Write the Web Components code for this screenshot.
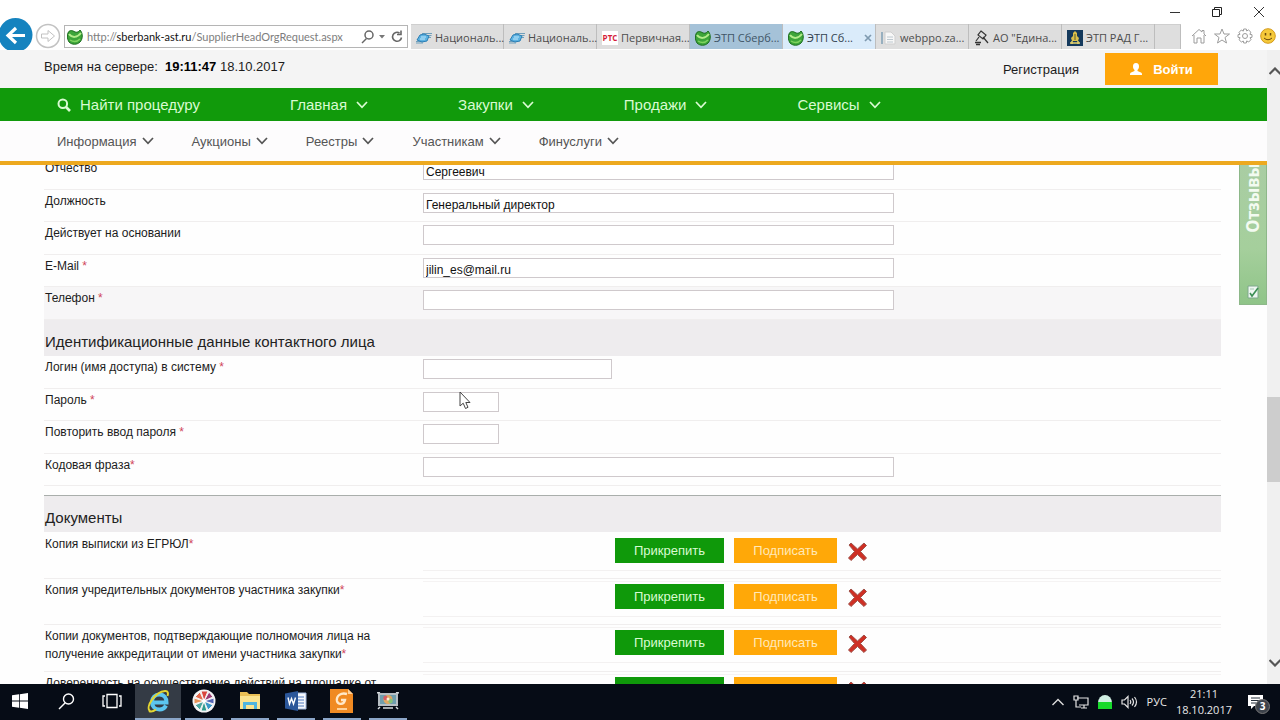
<!DOCTYPE html>
<html lang="ru">
<head>
<meta charset="utf-8">
<title>ЭТП Сбербанк-АСТ</title>
<style>
html,body{margin:0;height:100%;overflow:hidden}
body{font-family:"Liberation Sans",Arial,sans-serif;font-size:13px;color:#1c1c1c;background:#fff}
</style>
</head>
<body>
<desktop-app></desktop-app>
<script>
const define=(name,css,html)=>customElements.define(name,class extends HTMLElement{
  constructor(){
    super();
    const root=this.attachShadow({mode:'open'});
    const t=document.createElement('template');
    const markup=typeof html==='function'?html(n=>this.getAttribute(n)||'',this):html;
    t.innerHTML=`<style>*{box-sizing:border-box}button,input{font:inherit;color:inherit}button{border:0;background:none;padding:0;cursor:pointer}a{color:inherit;text-decoration:none}svg{display:block;flex:none}${css}</style>${markup}`;
    root.append(t.content.cloneNode(true));
  }
});

const icons={
  leaf:`<svg width="16" height="16" viewBox="0 0 16 16"><path d="M1 4C2 1 5 1 8 3C11 4 12 2 13 1C16 4 16 10 13 13C10 16 5 16 2 13C0 10 0 6 1 4Z" fill="#3da53a" stroke="#1b6b1e"/><path d="M2 5C5 9 10 9 14 4" fill="none" stroke="#b4ec8c" stroke-width="2"/><path d="M3 11C6 13 10 13 13 10" fill="none" stroke="#7fd35f" stroke-width="1.5"/></svg>`,
  nep:`<svg width="16" height="16" viewBox="0 0 16 16"><path d="M6 3.500H16M5 5.500H15.500M10 7.500H15M1 9.500H5M0 11.500H9M0 13H7" stroke="#6f9fbb" stroke-width="1"/><path d="M4 5L8 4L13 6L11 11L6 12L1 10Z" fill="#5cb2e2" stroke="#2c7fb5"/><path d="M5 7H10M4 9H9" stroke="#c3e9fc"/></svg>`,
  doc:`<svg width="16" height="16" viewBox="0 0 16 16"><path d="M1 2V14" stroke="#7f9fb4" stroke-width="1.5"/><path d="M4 2H10L14 6V14H4Z" fill="#f7f7f7" stroke="#cfcfcf"/><path d="M6 7H12M6 9.500H12M6 12H12" stroke="#bdc8cf"/></svg>`,
  gavel:`<svg width="16" height="16" viewBox="0 0 16 16" fill="none" stroke="#333" stroke-width="1.200"><path d="M7 1L12 5L9 9L4 5ZM9 7L14 13M5 7L2 11"/><path d="M1 12.500H7M2 14.500H6" stroke-width="1.6"/></svg>`,
  rad:`<svg width="16" height="16" viewBox="0 0 16 16"><path d="M0 0H16V16H0Z" fill="#14395c"/><path d="M8 1L10 3V6L12 8L11 11H5L4 8L6 6V3Z" fill="#d9bf4a"/><path d="M3 13H13M5 11V14M11 11V14" stroke="#e6d36b" stroke-width="1.5"/><path d="M8 4V10" stroke="#5a5f2c"/></svg>`,
  person:`<svg width="12" height="12" viewBox="0 0 12 12"><path d="M6 0C8.200 0 9 1.500 9 3.500C9 5 8.400 6.300 7.500 7V8L11 9.500C12 10 12 11 12 12H0C0 11 0 10 1 9.500L4.500 8V7C3.600 6.300 3 5 3 3.500C3 1.500 3.800 0 6 0Z" fill="#fff"/></svg>`,
  cross:`<svg width="21" height="21" viewBox="0 0 21 21"><path d="M2 4L4 2L10.500 8L17 2L19.500 4.500L13.500 10.500L19.500 17L17 19.500L10.500 13.500L4 19.500L1.500 17L7.500 10.500Z" fill="#cf2f24" stroke="#a0524a"/></svg>`,
  start:`<svg width="16" height="16" viewBox="0 0 16 16" fill="#fff"><path d="M0 2.300L7 1.300V7.600H0ZM7.800 1.200L16 0V7.600H7.800ZM0 8.400H7V14.700L0 13.700ZM7.800 8.400H16V16L7.800 14.800Z"/></svg>`,
  find:`<svg width="17" height="17" viewBox="0 0 17 17" fill="none" stroke="#fff" stroke-width="1.4"><circle cx="10.500" cy="6" r="5"/><path d="M7 10L1 16"/></svg>`,
  views:`<svg width="20" height="16" viewBox="0 0 20 16" fill="none" stroke="#fff" stroke-width="1.3"><path d="M5 1.500H15V14.500H5ZM3 3H1V13H3M17 3H19V13H17"/></svg>`,
  ie:`<svg width="24" height="24" viewBox="0 0 24 24" fill="none"><path d="M20 16.500C18.500 19.500 16 20.500 13.500 20.500C9 20.500 6 17.500 6 13C6 8.500 9 5.500 13.500 5.500C18 5.500 20.500 9 20.500 13.500H8" stroke="#5cc6f0" stroke-width="4"/><path d="M4 22C-1 18 9 3 19 2C22 1.700 22.500 4 21.500 7" stroke="#e3d532" stroke-width="2"/><path d="M3 22C5 23 8 22 10 20.500" stroke="#e3d532" stroke-width="2"/></svg>`,
  wheel:`<svg width="24" height="24" viewBox="0 0 24 24"><circle cx="12" cy="12" r="11.500" fill="#f4f4f4"/><g stroke="#f4f4f4"><path d="M12 12L9 2L16 2Z" fill="#d9463d"/><path d="M12 12L17 3L21 8Z" fill="#9c3b74"/><path d="M12 12L22 9L22 15Z" fill="#5566b5"/><path d="M12 12L21 16L16 21Z" fill="#3a98c8"/><path d="M12 12L15 22L9 22Z" fill="#2f9b8e"/><path d="M12 12L8 21L3 16Z" fill="#4aa7a0"/><path d="M12 12L2 15L2 9Z" fill="#e8935a"/><path d="M12 12L3 8L8 3Z" fill="#e56a4c"/></g><circle cx="12" cy="12" r="2" fill="#fff"/></svg>`,
  folder:`<svg width="22" height="20" viewBox="0 0 22 20"><path d="M1 1H8L10 3H21V18H1Z" fill="#e9bf55"/><path d="M1 5H21V18H1Z" fill="#fbe38f"/><path d="M4 11H18V18H15V14H7V18H4Z" fill="#4fb4de"/></svg>`,
  word:`<svg width="22" height="20" viewBox="0 0 22 20"><path d="M11 2H21V18H11Z" fill="#f5f8fc" stroke="#9fb7dd"/><path d="M13 6H19M13 9H19M13 12H19M13 15H19" stroke="#4e7ac0"/><path d="M0 2.500L13 0V20L0 17.500Z" fill="#2b579a"/><path d="M3 6.500L4.500 13L6.500 7.500L8.500 13L10.500 6.500" fill="none" stroke="#fff" stroke-width="1.400"/></svg>`,
  foxit:`<svg width="24" height="24" viewBox="0 0 24 24"><path d="M0 0H18L23 5V24H0Z" fill="#f08a22"/><path d="M18 0V5H23Z" fill="#ffd29a"/><path d="M17 5C11 3 6 7 7 12C8 16 14 16 15 11H11" fill="none" stroke="#ffe8c8" stroke-width="2.400"/><path d="M7 20H17" stroke="#ffd29a" stroke-width="2"/></svg>`,
  monitor:`<svg width="22" height="18" viewBox="0 0 22 18"><path d="M1 1H21V14H1Z" fill="#b7bfc4"/><path d="M3 3H19V12H3Z" fill="#6f9fae"/><circle cx="11" cy="7.500" r="4.500" fill="#e0a862"/><circle cx="8.500" cy="6" r="2.200" fill="#d75e64"/><circle cx="13.500" cy="9" r="2.200" fill="#84c47a"/><circle cx="11" cy="7" r="1.500" fill="#fff3d8"/><path d="M0 1L3 0M19 0L22 1M6 16H16M1 17L3 15M21 17L19 15" stroke="#d8dde0" stroke-width="1.500"/></svg>`
};
const chevron=`<svg width="12" height="8" viewBox="0 0 12 8"><path d="M1 1L6 6.300L11 1" fill="none" stroke="currentColor" stroke-width="1.700"/></svg>`;

define('browser-tab',`
:host{display:flex;flex:0 1 93px;min-width:0;border-right:1px solid #bdbdbd}
button{display:flex;align-items:center;gap:3px;width:100%;padding:2px 3px 0 5px;background:#dedede;color:#4d4d4d;text-align:left;border-top:1px solid #cfcfcf}
:host([state=group]) button{background:#a5c2d8;border-color:#a5c2d8;color:#3f5566}
:host([state=active]) button{background:#daebfa;border-color:#daebfa;color:#33424f}
span{white-space:nowrap;flex:1}
.rts{flex:none;width:16px;text-align:center;font:bold 8px/14px "Open Sans",sans-serif;color:#d51d3a;background:#fff}
`,g=>`<button role="tab">${g('icon')==='rts'?'<b class="rts">РТС</b>':icons[g('icon')]}<span><slot></slot></span>${g('state')==='active'?'<svg width="8" height="8" viewBox="0 0 8 8"><path d="M1 1L7 7M7 1L1 7" stroke="#7f9ab0" stroke-width="1.700"/></svg>':''}</button>`);

define('browser-chrome',`
:host{display:block;flex:none;height:50px;background:#fff;overflow:hidden;font:11px/16px "Open Sans","Noto Sans",sans-serif}
.title{display:flex;justify-content:flex-end;align-items:center;gap:32px;height:24px;padding-right:16px}
.bar{display:flex;height:25px;align-items:stretch}
.back{margin-top:-7px;margin-left:-2px}
.fwd{margin:-1px 3px 0 2px}
.addr{flex:1;min-width:160px;display:flex;align-items:center;gap:4px;height:23px;margin-top:1px;border:1px solid #b5b5b5;padding:0 3px 0 2px;background:#fff}
.url{flex:1;min-width:0;position:relative;display:flex}
.url input{width:100%;border:0;outline:0;padding:0;color:transparent;background:none;height:18px}
.url label{position:absolute;left:0;top:0;color:#7d7d7d;white-space:nowrap;font:11px/18px Lato,"Open Sans",sans-serif}
.url b{font-weight:400;color:#111}
.tabs{display:flex;flex:0 1 771px;margin-left:3px;min-width:0}
.new{flex:0 1 26px;background:#dedede;border-top:1px solid #cfcfcf;border-right:1px solid #bdbdbd}
.tools{display:flex;gap:7px;align-items:center;padding:0 4px 2px 9px}
`,`<div class="title">
<button aria-label="Свернуть"><svg width="10" height="10" viewBox="0 0 10 10"><path d="M0 5.500H10" stroke="#333"/></svg></button>
<button aria-label="Развернуть"><svg width="10" height="10" viewBox="0 0 10 10" fill="none" stroke="#222"><path d="M.5 2.500H7.500V9.500H.5ZM2.500 2.500V.5H9.500V7.500H7.500"/></svg></button>
<button aria-label="Закрыть"><svg width="10" height="10" viewBox="0 0 10 10"><path d="M0 0L10 10M10 0L0 10" stroke="#333"/></svg></button></div>
<div class="bar">
<button class="back" aria-label="Назад"><svg width="35" height="36" viewBox="0 0 35 36"><circle cx="17.500" cy="18" r="17" fill="#1583bf"/><path d="M27 18.500H10M18 11L10 18.500L18 26" fill="none" stroke="#fff" stroke-width="3.200"/></svg></button>
<button class="fwd" aria-label="Вперёд"><svg width="26" height="26" viewBox="0 0 26 26" fill="none" stroke="#c2c2c2"><circle cx="13" cy="13" r="11.500" stroke-width="1.500"/><path d="M6.500 11H13V7.500L19.500 13L13 18.500V15H6.500Z"/></svg></button>
<div class="addr">${icons.leaf}<div class="url"><input id="u" aria-label="Адрес"><label for="u">http://<b>sberbank-ast.ru</b>/SupplierHeadOrgRequest.aspx</label></div>
<svg width="13" height="14" viewBox="0 0 13 14" fill="none" stroke="#666" stroke-width="1.500"><circle cx="8" cy="5" r="4"/><path d="M5.500 8.500L1 13"/></svg>
<svg width="8" height="4" viewBox="0 0 8 4"><path d="M1 0H7L4 3.500Z" fill="#777"/></svg>
<svg width="14" height="13" viewBox="0 0 14 13" fill="none" stroke="#666" stroke-width="1.600"><path d="M11.500 7.500A4.500 4.500 0 1 1 9.500 3M7 4.500H11V.5"/></svg></div>
<div class="tabs" role="tablist">
<browser-tab icon="nep">Националь...</browser-tab><browser-tab icon="nep">Националь...</browser-tab><browser-tab icon="rts">Первичная...</browser-tab><browser-tab icon="leaf" state="group">ЭТП Сберб...</browser-tab><browser-tab icon="leaf" state="active">ЭТП Сб...</browser-tab><browser-tab icon="doc">webppo.za...</browser-tab><browser-tab icon="gavel">АО "Едина...</browser-tab><browser-tab icon="rad">ЭТП РАД Г...</browser-tab><button class="new" aria-label="Новая вкладка"></button></div>
<div class="tools">
<button aria-label="Домой"><svg width="16" height="16" viewBox="0 0 16 16" fill="none" stroke="#9c9c9c"><path d="M1 8L8 1.500L11 4V2.500H13V6L15 8M3 7V15H6V10H10V15H13V7"/></svg></button>
<button aria-label="Избранное"><svg width="16" height="16" viewBox="0 0 16 16" fill="none" stroke="#9c9c9c"><path d="M8 1L10 6H15.500L11 9.500L12.500 15L8 12L3.500 15L5 9.500L.5 6H6Z"/></svg></button>
<button aria-label="Сервис"><svg width="16" height="16" viewBox="0 0 16 16" fill="none" stroke="#9c9c9c"><circle cx="8" cy="8" r="2.500"/><path d="M6.700 1H9.300L9.700 3L11.500 1.900L13.900 4.200L12.900 6.300L15 6.700V9.300L13 9.700L14 11.600L11.700 14L9.700 12.900L9.300 15H6.700L6.300 13L4.400 14L2 11.700L3.100 9.700L1 9.300V6.700L3 6.300L2 4.400L4.300 2L6.300 3.100Z"/></svg></button>
<button aria-label="Отзыв"><svg width="16" height="16" viewBox="0 0 16 16"><circle cx="8" cy="8" r="7.300" fill="#f5c93a" stroke="#d39a1c"/><path d="M5.500 5V7.500M10.500 5V7.500" stroke="#6b4a0c" stroke-width="1.500"/><path d="M4 10Q8 13.500 12 10" fill="none" stroke="#6b4a0c"/></svg></button>
</div></div>`);

define('menu-item',`:host{display:block}button{display:flex;align-items:center;gap:var(--menu-gap,5px);white-space:nowrap}`,
`<button aria-haspopup="true"><slot></slot>${chevron}</button>`);

define('site-header',`
:host{display:block;flex:none}
.top{display:flex;align-items:center;height:38px;padding:0 49px 0 44px;background:#f4f4f4}
.time{flex:1;padding-bottom:5px;white-space:pre}
.time b{color:#000}
.reg{margin-right:26px}
.login{display:flex;align-items:center;justify-content:center;gap:11px;width:113px;height:32px;background:#ffa60a;color:#fff;font-weight:700}
.main{display:flex;align-items:center;gap:90px;height:33px;padding:0 57px;background:#119a0b;color:#d9fbd2;font-size:15px;--menu-gap:9px}
.find{display:flex;align-items:center;gap:9px;white-space:nowrap}
.sub{display:flex;align-items:center;gap:38px;height:44px;padding:0 57px;background:#fdfcfd;color:#555;border-bottom:4px solid #eda91f}
`,`<div class="top"><div class="time">Время на сервере:  <b>19:11:47</b> 18.10.2017</div><a class="reg" href="#">Регистрация</a><button class="login">${icons.person}Войти</button></div>
<nav class="main"><a class="find" href="#"><svg width="14" height="14" viewBox="0 0 14 14" fill="none" stroke="#d9fbd2"><circle cx="5.800" cy="5.800" r="4.300" stroke-width="2"/><path d="M9 9L13 13" stroke-width="2.600"/></svg>Найти процедуру</a><menu-item>Главная</menu-item><menu-item>Закупки</menu-item><menu-item>Продажи</menu-item><menu-item>Сервисы</menu-item></nav>
<nav class="sub"><menu-item>Информация</menu-item><menu-item>Аукционы</menu-item><menu-item>Реестры</menu-item><menu-item>Участникам</menu-item><menu-item>Финуслуги</menu-item></nav>`);

define('form-field',`
:host{display:grid;grid-template-columns:379px 1fr;align-items:start;height:32px;border-bottom:1px solid #f0eeee;line-height:18px}
:host(:nth-of-type(odd)){height:33px}
:host([shaded]){background:#f7f6f7}
label{padding:2px 0 0 1px}
i{font-style:normal;color:#d0455a}
input{display:block;width:471px;max-width:100%;height:20px;margin-top:3px;padding:3px 2px 0;border:1px solid #cfc9cc;border-radius:0;background:#fff;outline:0;color:#111}
:host([size=m]) input{width:189px}
:host([size=s]) input{width:76px}
`,g=>`<label for="f">${g('label')}${g('req')?`<i>${g('req')==='tight'?'':' '}*</i>`:''}</label><input id="f" type="${g('type')||'text'}" value="${g('value')}">`);

define('section-title',`
:host{display:block;background:#eeecee}
:host([ruled]){margin-top:9px;border-top:1px solid #a9aeab}
h2{margin:0;padding:13px 1px 5px;font-weight:400;font-size:15px;line-height:18px;color:#222}
`,`<h2><slot></slot></h2>`);

define('document-row',`
:host{display:grid;grid-template-columns:379px 1fr;align-items:start;padding:2px 0 7px;border-bottom:1px solid #f0eeee;line-height:18px}
.name{padding:0 20px 1px 1px}
i{font-style:normal;color:#d0455a}
:host([optional]) i{display:none}
.act{display:flex;align-items:center;gap:10px;padding:2px 0 7px 192px;border-top:1px solid #f5f3f3;border-bottom:1px solid #f3f1f1}
:host(:first-of-type) .act{border-top-color:transparent}
.attach,.sign{height:25px;font-size:13px}
.attach{width:109px;background:#0f990a;color:#d9fbd2}
.sign{width:103px;background:#ffa808;color:#ffe9b8}
.del{margin-top:1px;height:21px}
`,`<div class="name"><slot></slot><i>*</i></div><div class="act"><button class="attach">Прикрепить</button><button class="sign">Подписать</button><button class="del" aria-label="Удалить">${icons.cross}</button></div>`);

define('registration-form',`
:host{display:block;flex:1;min-height:0;overflow:hidden;background:#fefefe;font-size:12px}
form{margin:-8px 46px 0 44px}
.docs{padding-top:1px}
`,`<form><div>
<form-field label="Отчество" value="Сергеевич"></form-field>
<form-field label="Должность" value="Генеральный директор"></form-field>
<form-field label="Действует на основании"></form-field>
<form-field label="E-Mail" req="1" value="jilin_es@mail.ru"></form-field>
<form-field label="Телефон" req="1" shaded></form-field></div>
<section-title>Идентификационные данные контактного лица</section-title><div>
<form-field label="Логин (имя доступа) в систему" req="1" size="m"></form-field>
<form-field label="Пароль" req="1" size="s" type="password"></form-field>
<form-field label="Повторить ввод пароля" req="1" size="s" type="password"></form-field>
<form-field label="Кодовая фраза" req="tight"></form-field></div>
<section-title ruled>Документы</section-title>
<div class="docs">
<document-row>Копия выписки из ЕГРЮЛ</document-row>
<document-row>Копия учредительных документов участника закупки</document-row>
<document-row>Копии документов, подтверждающие полномочия лица на получение аккредитации от имени участника закупки</document-row>
<document-row optional>Доверенность на осуществление действий на площадке от</document-row></div></form>`);

define('feedback-tab',`
:host{display:block}
button{display:flex;flex-direction:column;align-items:center;justify-content:flex-end;gap:51px;width:28px;height:140px;padding-bottom:5px;overflow:hidden;background:linear-gradient(#a9cda3,#a5cf9c 60%,#8fc488);border:1px solid #8db889;border-top:0}
span{writing-mode:vertical-rl;transform:rotate(180deg);font:bold 17px/20px "Noto Sans","Open Sans",sans-serif;color:#f3fbf1}
`,`<button><span>Отзывы</span><svg width="13" height="15" viewBox="0 0 13 15"><path d="M1 2H11V14H1Z" fill="#eef7f2" stroke="#7fa88c"/><path d="M3 9L5 12L11 4" fill="none" stroke="#3c8f55" stroke-width="1.600"/><path d="M3 5H7" stroke="#a6c6b4"/></svg></button>`);

define('scroll-bar',`
:host{display:flex;flex-direction:column;flex:none;width:13px;background:#f0f0f0;overflow:hidden}
button{display:block;height:42px;padding-left:2px}
.a{flex:305 0 0}.t{flex:85 0 0;background:#cdcdcd}.b{flex:160 0 0}
`,`<button aria-label="Вверх"><svg width="11" height="8" viewBox="0 0 11 8"><path d="M.5 7L6 1.500L11.500 7" fill="none" stroke="#555" stroke-width="2.200"/></svg></button><div class="a"></div><div class="t"></div><div class="b"></div><button aria-label="Вниз"><svg width="11" height="8" viewBox="0 0 11 8"><path d="M.5 1L6 6.500L11.500 1" fill="none" stroke="#555" stroke-width="2.200"/></svg></button>`);

define('task-button',`
:host{display:flex;width:46px}
button{flex:1;display:flex;align-items:center;justify-content:center;border-bottom:2px solid transparent}
:host([open]){padding:0 4px}
:host([open]) button{border-color:#8ba6c8}
:host([active]){padding:0}
:host([active]) button{background:#343b45}
`,g=>`<button aria-label="${g('label')}">${icons[g('icon')]}</button>`);

define('task-bar',`
:host{display:flex;flex:none;height:36px;background:#060c16;color:#e8e8e8;font:11px/16px "Open Sans","Noto Sans",sans-serif;padding-right:15px}
.apps{flex:1;display:flex;margin-left:-3px}
.tray{display:flex;align-items:center;gap:9px}
.clock{text-align:center}
.note{position:relative;margin-left:6px}
.note span{position:absolute;left:8px;top:6px;width:15px;height:15px;border-radius:50%;background:#3d434b;border:1px solid #777;font:bold 10px/13px "Open Sans",sans-serif;text-align:center;color:#fff}
`,`<div class="apps"><task-button icon="start" label="Пуск"></task-button><task-button icon="find" label="Поиск"></task-button><task-button icon="views" label="Представление задач"></task-button><task-button icon="ie" label="Internet Explorer" open active></task-button><task-button icon="wheel" label="Фото" open></task-button><task-button icon="folder" label="Проводник" open></task-button><task-button icon="word" label="Word" open></task-button><task-button icon="foxit" label="Foxit" open></task-button><task-button icon="monitor" label="Запись экрана" open></task-button></div>
<div class="tray">
<svg width="12" height="8" viewBox="0 0 12 8"><path d="M.5 7L6 1.500L11.500 7" fill="none" stroke="#ddd" stroke-width="1.400"/></svg>
<svg width="16" height="14" viewBox="0 0 16 14" fill="none" stroke="#e4e4e4" stroke-width="1.200"><path d="M4 3H15V10H6M8 13H14M11 10V13M1 1H5V5H1ZM3 5V12H8"/></svg>
<svg width="14" height="14" viewBox="0 0 14 14"><path d="M0 8A7 8 0 0 1 14 8V14H0Z" fill="#cfeee2"/><path d="M0 7H14V14H0Z" fill="#17d92b"/></svg>
<svg width="17" height="14" viewBox="0 0 17 14" fill="none" stroke="#e4e4e4" stroke-width="1.200"><path d="M1 5H3.500L7 1.500V12.500L3.500 9H1ZM9 5Q10.500 7 9 9M11 3.500Q14 7 11 10.500M13.500 2Q17.500 7 13.500 12"/></svg>
<span>РУС</span><div class="clock">21:11<br>18.10.2017</div>
<button class="note" aria-label="Уведомления"><svg width="18" height="18" viewBox="0 0 18 18"><path d="M1 2H16V13H7L4 16V13H1Z" fill="#fff"/><path d="M4 5H13M4 7.500H13M4 10H9" stroke="#26303c"/></svg><span>3</span></button></div>`);

define('desktop-app',`
:host{display:flex;flex-direction:column;height:100vh;position:relative;overflow:hidden}
.view{flex:1;display:flex;min-height:0}
.site{flex:1;min-width:0;display:flex;flex-direction:column}
.body{flex:1;min-height:0;display:flex;position:relative}
feedback-tab{position:absolute;right:0;top:0}
.cursor{position:absolute;left:459px;top:391px}
`,`<browser-chrome></browser-chrome><div class="view"><div class="site"><site-header></site-header><div class="body"><registration-form></registration-form><feedback-tab></feedback-tab></div></div><scroll-bar></scroll-bar></div><task-bar></task-bar>
<svg class="cursor" width="13" height="19" viewBox="0 0 13 19"><path d="M1 1V15L4.200 12.200L6.500 17.500L9 16.300L6.800 11.500H11Z" fill="#fff" stroke="#444"/></svg>`);
</script>
</body>
</html>
